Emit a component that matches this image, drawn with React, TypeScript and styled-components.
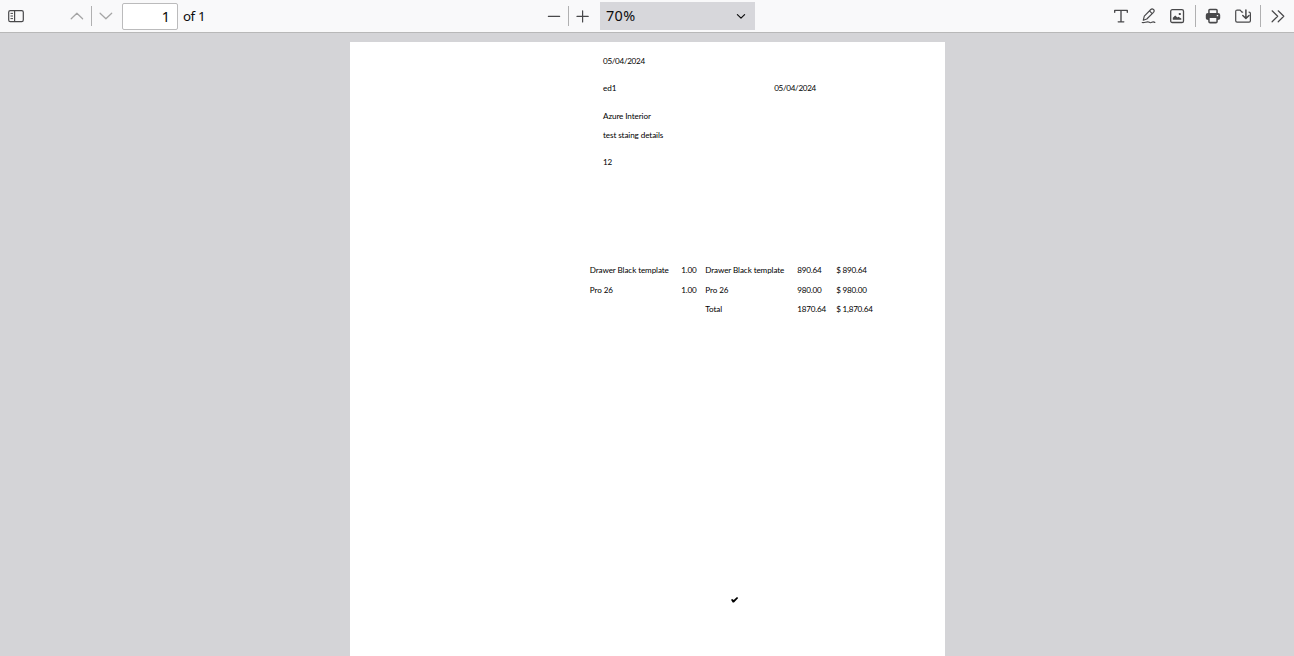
import React from 'react';
import styled, { createGlobalStyle } from 'styled-components';

const Global = createGlobalStyle`
  * { box-sizing: border-box; }
  body { margin: 0; background: #d4d4d7; overflow: hidden; font-family: "Noto Sans", sans-serif; }
`;

const Viewer = styled.div`
  height: 656px;
  display: flex;
  flex-direction: column;
  overflow: hidden;
`;

const Toolbar = styled.header`
  flex: none;
  height: 33px;
  display: grid;
  grid-template-columns: 540px 1fr 189px;
  background: #f9f9fa;
  border-bottom: 1px solid #b8b8b8;
  color: #0c0c0d;
  font-size: 13.33px;
`;

const Group = styled.div`
  display: flex;
  align-items: center;
  height: 32px;
`;

const ToolButton = styled.button<{ $gap?: number; $dim?: boolean }>`
  width: 28px;
  height: 28px;
  flex: none;
  margin: 0 0 0 ${p => p.$gap ?? 0}px;
  padding: 6px;
  border: 0;
  background: none;
  color: ${p => (p.$dim ? '#a5a5a5' : '#48484a')};
  svg { display: block; width: 16px; height: 16px; }
`;

const Separator = styled.span<{ $tall?: boolean; $before?: number }>`
  width: 1px;
  flex: none;
  height: ${p => (p.$tall ? 22 : 20)}px;
  margin: 0 ${p => (p.$tall ? 3 : 0)}px 0 ${p => p.$before ?? 0}px;
  background: #b0b0b1;
`;

const PageInput = styled.input`
  width: 56px;
  height: 27px;
  margin-left: 2px;
  padding: 0 7px;
  border: 1px solid #bbbbbc;
  border-radius: 2px;
  background: #fff;
  color: #060606;
  font: 14.4px "Noto Sans", sans-serif;
  text-align: right;
`;

const PageCount = styled.span`
  margin-left: 5px;
  line-height: 18px;
  letter-spacing: -0.5px;
  word-spacing: 0.4px;
`;

const ZoomSelect = styled.div`
  display: flex;
  align-items: center;
  justify-content: space-between;
  width: 155px;
  height: 28px;
  margin-left: 3px;
  padding: 0 8px 1px 6px;
  background: #d7d7db;
  font-size: 14.4px;
  letter-spacing: 0.35px;
  svg { width: 12px; height: 12px; }
`;

const Paper = styled.main`
  width: 595px;
  height: 614px;
  flex: none;
  margin: 9px 0 0 350px;
  background: #fff;
  color: #000;
  font-family: Lato, sans-serif;
  font-size: 8.1px;
  line-height: 12px;
  white-space: nowrap;
`;

const spacing = { text: -0.09, date: -0.31, amount: -0.19, currency: -0.23 };
type Kind = keyof typeof spacing;

const Value = styled.span<{ $kind: Kind }>`
  letter-spacing: ${p => spacing[p.$kind]}px;
`;

const Details = styled.section`
  height: 215px;
  padding: 13px 0 0 253px;
`;

const DetailRow = styled.div<{ $space: number }>`
  display: grid;
  grid-template-columns: 171.2px auto;
  height: 12px;
  margin-bottom: ${p => p.$space}px;
`;

const ItemTable = styled.section`
  display: grid;
  grid-template-columns: 91.5px 24px 92px 39px 60px;
  grid-template-rows: 20px 19px 19px;
  margin-left: 239.8px;
  padding-top: 7px;
  height: 331px;
`;

const CheckMark = styled.div`
  margin-left: 380px;
  padding-top: 8px;
  svg { display: block; }
`;

const line = { fill: 'none', stroke: 'currentColor', strokeLinecap: 'round', strokeLinejoin: 'round' } as const;

const SidebarIcon = () => (
  <svg viewBox="0 0 16 16" {...line}>
    <rect x=".7" y="2.6" width="14.6" height="11" rx="1.6" strokeWidth="1.2" />
    <path d="M6.6 2.8v10.6" strokeWidth="1.2" />
    <path d="M2.9 5.4h1.7M2.9 8h1.7M2.9 10.6h1.7" />
  </svg>
);
const UpIcon = () => <svg viewBox="0 0 16 16" {...line} strokeWidth="1.25"><path d="m2.2 10.8 5.7-5.6 5.7 5.6" /></svg>;
const DownIcon = () => <svg viewBox="0 0 16 16" {...line} strokeWidth="1.25"><path d="m2.1 5.2 5.8 5.6 5.8-5.6" /></svg>;
const MinusIcon = () => <svg viewBox="0 0 16 16" {...line} strokeWidth="1.2"><path d="M2.4 8.4h11.2" /></svg>;
const PlusIcon = () => <svg viewBox="0 0 16 16" {...line} strokeWidth="1.2"><path d="M2 8.4h11.2M7.6 2.8V14" /></svg>;
const SelectArrow = () => <svg viewBox="0 0 12 12" {...line} strokeWidth="1.2"><path d="m2.4 4.6 3.6 3.5 3.6-3.5" /></svg>;
const TextIcon = () => (
  <svg viewBox="0 0 16 16" {...line} strokeWidth="1.35">
    <path d="M1.7 4.2V2.3h12.6v1.9M8 2.3v11.4M5.2 13.8h5.6" />
  </svg>
);
const DrawIcon = () => (
  <svg viewBox="0 0 16 16" {...line} strokeWidth="1.15">
    <path d="m2.3 12.2 1-4L9.8 1.5q1.3-1.3 2.7 0t0 2.8L5.8 11l-3.5 1.2M8.5 2.9l2.7 2.7M1.2 14.5c2.2.5 4.1-.9 6-.6 1.1.1 1.1.9 2.3.8 1.1-.1 1.7-.8 2.6-.8.8 0 1.1.4 1.8.4" />
  </svg>
);
const ImageIcon = () => (
  <svg viewBox="0 0 16 16" {...line} strokeWidth="1.3">
    <rect x="1.7" y="1.7" width="12.8" height="12.8" rx="1.6" />
    <path d="M3.8 11.7V9.8l2.4-2.2 2.2 2 1-.9 2.9 1.8v1.2z" fill="currentColor" stroke="none" />
    <rect x="9.8" y="5" width="2" height="2" rx=".6" fill="currentColor" stroke="none" />
  </svg>
);
const PrintIcon = () => (
  <svg viewBox="0 0 16 16" {...line}>
    <path d="M3.2 5V2.3q0-1.6 1.6-1.6h6.4q1.6 0 1.6 1.6V5h.3q2.1 0 2.1 2.1v3.2q0 1.8-2.4 1.8v1.4q0 1.9-1.9 1.9H5.1q-1.9 0-1.9-1.9v-1.4Q.8 12.1.8 10.3V7.1Q.8 5 2.9 5z" fill="currentColor" stroke="none" />
    <path d="M4.7 2.2h6.6V5H4.7zM4.7 10h6.6v3.8H4.7zM11.8 7h1.4v1.2h-1.4z" fill="#f9f9fa" stroke="none" />
  </svg>
);
const SaveIcon = () => (
  <svg viewBox="0 0 16 16" {...line} strokeWidth="1.2">
    <path d="M7.7 4.1H6.9L5.2 2.1H2.1Q.7 2.1.7 3.5v9.2q0 1.4 1.4 1.4h12q1.3 0 1.3-1.4V5.6q0-1.5-1.4-1.5" />
    <path d="M10.9 2.1v8M7.8 7.5l3.1 3 3.1-3" strokeWidth="1.5" />
  </svg>
);
const MoreIcon = () => <svg viewBox="0 0 16 16" {...line} strokeWidth="1.2"><path d="m2.1 2.8 5.6 5.5-5.6 5.5M8.2 2.8l5.6 5.5-5.6 5.5" /></svg>;

const details: { left: string; kind: Kind; right: string; space: number }[] = [
  { left: '05/04/2024', kind: 'date', right: '', space: 15 },
  { left: 'ed1', kind: 'text', right: '05/04/2024', space: 16 },
  { left: 'Azure Interior', kind: 'text', right: '', space: 7 },
  { left: 'test staing details', kind: 'text', right: '', space: 15 },
  { left: '12', kind: 'text', right: '', space: 0 },
];
const columns: Kind[] = ['text', 'amount', 'text', 'amount', 'currency'];
const items = [
  ['Drawer Black template', '1.00', 'Drawer Black template', '890.64', '$ 890.64'],
  ['Pro 26', '1.00', 'Pro 26', '980.00', '$ 980.00'],
  ['', '', 'Total', '1870.64', '$ 1,870.64'],
];

export default function App() {
  return (
    <Viewer>
      <Global />
      <Toolbar>
        <Group>
          <ToolButton $gap={2} aria-label="Toggle sidebar"><SidebarIcon /></ToolButton>
          <ToolButton $gap={33} $dim aria-label="Previous page"><UpIcon /></ToolButton>
          <Separator />
          <ToolButton $dim aria-label="Next page"><DownIcon /></ToolButton>
          <PageInput aria-label="Page" defaultValue="1" />
          <PageCount>of 1</PageCount>
        </Group>
        <Group>
          <ToolButton aria-label="Zoom out"><MinusIcon /></ToolButton>
          <Separator />
          <ToolButton aria-label="Zoom in"><PlusIcon /></ToolButton>
          <ZoomSelect>70%<SelectArrow /></ZoomSelect>
        </Group>
        <Group>
          <ToolButton $gap={2} aria-label="Text"><TextIcon /></ToolButton>
          <ToolButton aria-label="Draw"><DrawIcon /></ToolButton>
          <ToolButton aria-label="Image"><ImageIcon /></ToolButton>
          <Separator $tall $before={4} />
          <ToolButton aria-label="Print"><PrintIcon /></ToolButton>
          <ToolButton $gap={2} aria-label="Save"><SaveIcon /></ToolButton>
          <Separator $tall $before={3} />
          <ToolButton aria-label="Tools"><MoreIcon /></ToolButton>
        </Group>
      </Toolbar>
      <Paper>
        <Details>
          {details.map((row, i) => (
            <DetailRow key={i} $space={row.space}>
              <Value $kind={row.kind}>{row.left}</Value>
              <Value $kind="date">{row.right}</Value>
            </DetailRow>
          ))}
        </Details>
        <ItemTable>
          {items.flatMap((row, r) =>
            row.map((cell, c) => <Value key={`${r}-${c}`} $kind={columns[c]}>{cell}</Value>)
          )}
        </ItemTable>
        <CheckMark>
          <svg width="9" height="8" viewBox="0 0 9 8"><path d="m1 3.8 1.2-.9 1.5 1.2L7 1l1.2 1L4 6.6 2.7 6.5z" fill="#000" /></svg>
        </CheckMark>
      </Paper>
    </Viewer>
  );
}
